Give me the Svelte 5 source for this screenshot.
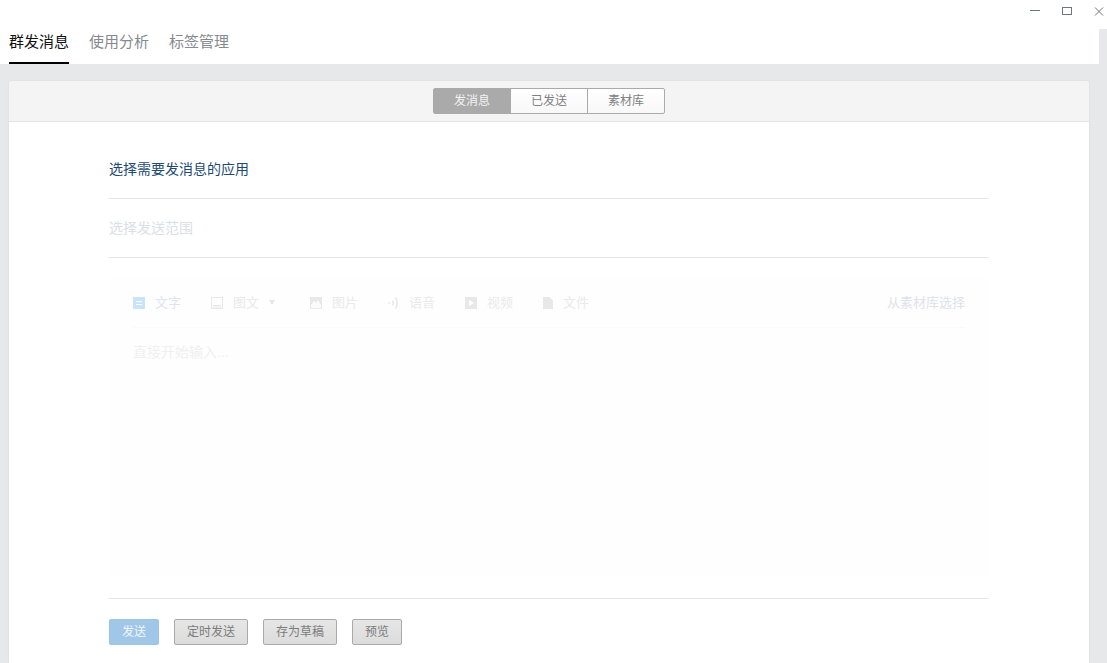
<script>
	const tabs = ['群发消息', '使用分析', '标签管理'];
	const segments = ['发消息', '已发送', '素材库'];
	const actions = ['定时发送', '存为草稿', '预览'];
</script>

<div class="window">
	<div class="titlebar">
		<svg class="ctl" width="14" height="14" viewBox="0 0 14 14"><path d="M0 5.500h10" stroke="#6f767e" fill="none" /></svg>
		<svg class="ctl" width="14" height="14" viewBox="0 0 14 14"><rect x="1.500" y="2.500" width="9" height="7" stroke="#6f767e" fill="none" /></svg>
		<svg class="ctl" width="14" height="14" viewBox="0 0 14 14"><path d="M3 2.500l8 8M11 2.500l-8 8" stroke="#6f767e" fill="none" /></svg>
	</div>
	<div class="page">
		<nav class="tabs">
			{#each tabs as tab, i}
				<span class="tab" class:active={i === 0}>{tab}</span>
			{/each}
		</nav>
		<main class="card">
			<div class="card-head">
				<div class="segments">
					{#each segments as seg, i}
						<span class="seg" class:on={i === 0}>{seg}</span>
					{/each}
				</div>
			</div>
			<div class="form">
				<div class="row app">选择需要发消息的应用</div>
				<div class="row range">选择发送范围</div>
				<div class="editor">
					<div class="toolbar">
						<span class="tool blue">
							<svg width="12" height="12" viewBox="0 0 12 12"><rect width="12" height="12" fill="#c9e3fa" /><path d="M3 4.500h6M3 7.500h6" stroke="#fff" /></svg>
							<span class="tool-text">文字</span>
						</span>
						<span class="tool news">
							<svg width="12" height="12" viewBox="0 0 12 12"><rect x=".5" y=".5" width="11" height="11" fill="none" stroke="#e8e8e8" /><path d="M2 8.500h8M2 10h8" stroke="#e8e8e8" /></svg>
							<span class="tool-text">图文</span>
							<i class="caret"></i>
						</span>
						<span class="tool pic">
							<svg width="12" height="12" viewBox="0 0 12 12"><rect width="12" height="12" fill="#e8e8e8" /><path d="M1 11V8l3-4 2 2 2-3 3 5v3z" fill="#fbfbfb" /></svg>
							<span class="tool-text">图片</span>
						</span>
						<span class="tool voice">
							<svg width="11" height="12" viewBox="0 0 11 12"><circle cx="1" cy="6" r="1" fill="#e8e8e8" /><path d="M4.500 3.500q1.500 2.500 0 5M7.500 .5q3.500 5.500 0 11" fill="none" stroke="#e8e8e8" stroke-width="1.500" /></svg>
							<span class="tool-text">语音</span>
						</span>
						<span class="tool video">
							<svg width="12" height="12" viewBox="0 0 12 12"><path d="M0 0h12v12H0zM4 3v6l5-3z" fill="#e8e8e8" fill-rule="evenodd" /></svg>
							<span class="tool-text">视频</span>
						</span>
						<span class="tool file">
							<svg width="10" height="12" viewBox="0 0 10 12"><path d="M0 0h6.500L10 3.500V12H0z" fill="#e8e8e8" /></svg>
							<span class="tool-text">文件</span>
						</span>
						<span class="library">从素材库选择</span>
					</div>
					<div class="placeholder">直接开始输入...</div>
				</div>
				<div class="actions">
					<button class="btn primary">发送</button>
					{#each actions as label}
						<button class="btn">{label}</button>
					{/each}
				</div>
			</div>
		</main>
	</div>
</div>

<style>
	:global(body) {
		margin: 0;
		background: #e7e8ea;
		font-family: "Liberation Sans", "Noto Sans CJK SC", sans-serif;
	}

	.window {
		height: 663px;
		overflow: hidden;
		display: flex;
		flex-direction: column;
	}

	.titlebar {
		height: 29px;
		flex: none;
		background: #fff;
		display: flex;
		justify-content: flex-end;
		align-items: flex-start;
		padding: 5px 1px 0 0;
		box-sizing: border-box;
		gap: 17px;
	}

	.page {
		flex: 1;
		display: flex;
		flex-direction: column;
		padding-right: 8px;
	}

	.tabs {
		height: 35px;
		flex: none;
		background: #fff;
		display: flex;
		gap: 20px;
		padding-left: 9px;
		box-sizing: border-box;
	}

	.tab {
		font-size: 15px;
		line-height: 25px;
		color: #868a8e;
		height: 33px;
	}

	.tab.active {
		color: #111;
		border-bottom: 2px solid #000;
	}

	.card {
		flex: 1;
		margin: 17px 10px 0 9px;
		background: #fff;
		border-radius: 3px 3px 0 0;
		box-shadow: 0 0 2px rgba(0, 0, 0, 0.08);
	}

	.card-head {
		height: 33px;
		background: #f4f4f4;
		border-bottom: 1px solid #e4e4e4;
		border-radius: 3px 3px 0 0;
		display: flex;
		justify-content: center;
		padding-top: 7px;
	}

	.segments {
		display: flex;
		height: 26px;
		box-sizing: border-box;
		border: 1px solid #aaa;
		border-radius: 2px;
		background: linear-gradient(#fff, #f8f8f8);
	}

	.seg {
		width: 76px;
		text-align: center;
		font-size: 12px;
		line-height: 24px;
		color: #808080;
		border-left: 1px solid #aaa;
	}

	.seg:first-child {
		border-left: 0;
	}

	.seg.on {
		background: #aaa;
		color: #f4f4f4;
	}

	.form {
		padding: 0 100px;
	}

	.row {
		border-bottom: 1px solid #e4e5e8;
		box-sizing: border-box;
	}

	.app {
		height: 77px;
		padding-top: 37px;
		font-size: 14px;
		line-height: 20px;
		color: #1d4a72;
	}

	.range {
		height: 59px;
		padding-top: 19px;
		line-height: 20px;
		color: #d9e0e8;
		font-size: 14px;
	}

	.editor {
		margin-top: 20px;
		height: 297px;
		background: #fefefe;
		padding: 0 24px;
	}

	.toolbar {
		display: flex;
		align-items: center;
		height: 49px;
		border-bottom: 1px solid #fafafa;
		color: #eaeaea;
	}

	.tool {
		display: flex;
		align-items: center;
		gap: 10px;
		margin-left: 30px;
	}

	.tool:first-child {
		margin-left: 0;
	}

	.tool svg {
		flex: none;
	}

	.tool-text {
		font-size: 13px;
		line-height: 20px;
	}

	.blue .tool-text {
		color: #dfe5ee;
	}

	.pic {
		margin-left: 35px;
	}

	.caret {
		width: 0;
		height: 0;
		border: 3px solid transparent;
		border-top: 5px solid #e4e7ea;
		border-bottom: 0;
	}

	.library {
		margin-left: auto;
		font-size: 13px;
		line-height: 20px;
		color: #dde3ea;
	}

	.placeholder {
		padding-top: 14px;
		line-height: 20px;
		font-size: 14px;
		color: #f0f0f0;
	}

	.actions {
		margin-top: 23px;
		border-top: 1px solid #e4e5e8;
		padding-top: 20px;
		display: flex;
		gap: 15px;
	}

	.btn {
		height: 26px;
		padding: 0 12px;
		font: 12px/24px "Liberation Sans", "Noto Sans CJK SC", sans-serif;
		color: #7b7b7b;
		background: linear-gradient(#e6e6e6, #dcdcdc);
		border: 1px solid #aaa;
		border-radius: 2px;
	}

	.btn.primary {
		color: #f2f7fb;
		background: #a0c6e8;
		border-color: #9cc4e6;
	}
</style>
